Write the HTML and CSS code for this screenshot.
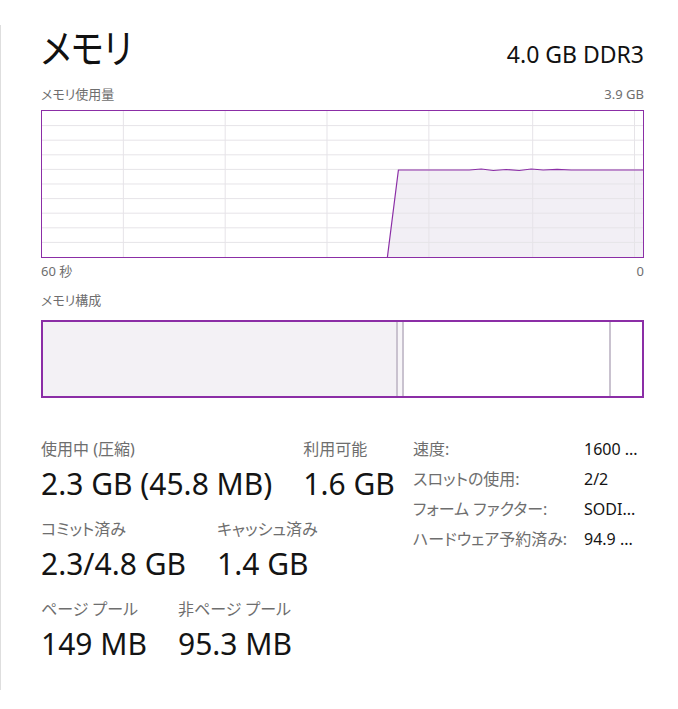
FILE: index.html
```html
<!DOCTYPE html>
<html lang="ja">
<head>
<meta charset="utf-8">
<title>メモリ</title>
<link rel="stylesheet" href="styles.css">
</head>
<body>
<div class="panel">
  <div class="title-row">
    <h1 class="title">メモリ</h1>
    <div class="model">4.0 GB DDR3</div>
  </div>

  <div class="cap-row top-cap">
    <span>メモリ使用量</span>
    <span>3.9 GB</span>
  </div>
  <div class="chart">
    <svg class="chart-svg" viewBox="0 0 602 146" preserveAspectRatio="none" aria-hidden="true">
      <polygon class="area" points="346,146 357,59 428,59 440,58 452,59.5 465,58.5 478,59.5 490,58 502,59 516,58.4 530,59 602,59 602,146"/>
      <g class="grid">
        <line x1="0" y1="14.6" x2="602" y2="14.6"/>
        <line x1="0" y1="29.2" x2="602" y2="29.2"/>
        <line x1="0" y1="43.8" x2="602" y2="43.8"/>
        <line x1="0" y1="58.4" x2="602" y2="58.4"/>
        <line x1="0" y1="73" x2="602" y2="73"/>
        <line x1="0" y1="87.6" x2="602" y2="87.6"/>
        <line x1="0" y1="102.2" x2="602" y2="102.2"/>
        <line x1="0" y1="116.8" x2="602" y2="116.8"/>
        <line x1="0" y1="131.4" x2="602" y2="131.4"/>
        <line x1="81.5" y1="0" x2="81.5" y2="146"/>
        <line x1="183.5" y1="0" x2="183.5" y2="146"/>
        <line x1="285.5" y1="0" x2="285.5" y2="146"/>
        <line x1="387.5" y1="0" x2="387.5" y2="146"/>
        <line x1="491.5" y1="0" x2="491.5" y2="146"/>
        <line x1="593.5" y1="0" x2="593.5" y2="146"/>
      </g>
      <polyline class="line" points="346,146 357,59 428,59 440,58 452,59.5 465,58.5 478,59.5 490,58 502,59 516,58.4 530,59 602,59"/>
    </svg>
  </div>
  <div class="cap-row axis-row">
    <span>60 秒</span>
    <span>0</span>
  </div>

  <div class="cap-row comp-cap">
    <span>メモリ構成</span>
  </div>
  <div class="composition">
    <div class="seg seg-inuse"></div>
    <div class="seg seg-modified"></div>
    <div class="seg seg-standby"></div>
    <div class="seg seg-free"></div>
  </div>

  <div class="stats">
    <div class="stats-left">
      <div class="stat-row">
        <div class="stat">
          <div class="stat-label">使用中 (圧縮)</div>
          <div class="stat-value">2.3 GB (45.8 MB)</div>
        </div>
        <div class="stat">
          <div class="stat-label">利用可能</div>
          <div class="stat-value">1.6 GB</div>
        </div>
      </div>
      <div class="stat-row">
        <div class="stat">
          <div class="stat-label">コミット済み</div>
          <div class="stat-value">2.3/4.8 GB</div>
        </div>
        <div class="stat">
          <div class="stat-label">キャッシュ済み</div>
          <div class="stat-value">1.4 GB</div>
        </div>
      </div>
      <div class="stat-row">
        <div class="stat">
          <div class="stat-label">ページ プール</div>
          <div class="stat-value">149 MB</div>
        </div>
        <div class="stat">
          <div class="stat-label">非ページ プール</div>
          <div class="stat-value">95.3 MB</div>
        </div>
      </div>
    </div>
    <dl class="props">
      <dt>速度:</dt><dd>1600 ...</dd>
      <dt>スロットの使用:</dt><dd>2/2</dd>
      <dt>フォーム ファクター:</dt><dd>SODI...</dd>
      <dt>ハードウェア予約済み:</dt><dd>94.9 ...</dd>
    </dl>
  </div>
</div>
</body>
</html>
```

FILE: styles.css
```css
html, body {
  margin: 0;
  padding: 0;
  background: #ffffff;
}

body {
  font-family: "Noto Sans", "Noto Sans CJK JP", sans-serif;
  font-feature-settings: "palt";
  color: #1b1b1b;
}

.panel {
  margin-top: 25px;
  height: 665px;
  border-left: 1px solid #dedede;
  padding: 0 34px 0 40px;
  box-sizing: border-box;
}

.title-row {
  display: flex;
  justify-content: space-between;
  align-items: baseline;
  height: 46px;
}

.title {
  margin: 0;
  font-size: 40px;
  font-weight: 400;
  line-height: 46px;
  color: #111;
  transform: scaleX(0.86);
  transform-origin: left center;
}

.model {
  font-size: 23px;
  line-height: 30px;
  color: #111;
}

.cap-row {
  display: flex;
  justify-content: space-between;
  font-size: 13px;
  line-height: 18px;
  color: #6e6e6e;
}

.top-cap {
  margin-top: 14px;
  margin-bottom: 7px;
}

.chart {
  height: 146px;
  border: 1px solid #8b2ea6;
}

.chart-svg {
  display: block;
  width: 100%;
  height: 100%;
}

.area {
  fill: #f2eff5;
}

.grid line {
  stroke: #e6e4e8;
  stroke-width: 1;
}

.line {
  fill: none;
  stroke: #8b2ea6;
  stroke-width: 1.2;
}

.axis-row {
  margin-top: 4px;
}

.comp-cap {
  margin-top: 11px;
  margin-bottom: 11px;
}

.composition {
  display: flex;
  height: 74px;
  border: 2px solid #8b2ea6;
}

.seg {
  height: 100%;
  box-sizing: border-box;
}

.seg-inuse {
  width: 355px;
  background: #f3f1f5;
  border-right: 2px solid #c9c2cf;
}

.seg-modified {
  width: 6px;
  background: #f7f5f8;
  border-right: 2px solid #c9c2cf;
}

.seg-standby {
  width: 207px;
  background: #ffffff;
  border-right: 2px solid #c9c2cf;
}

.seg-free {
  flex: 1;
  background: #ffffff;
}

.stats {
  display: flex;
  margin-top: 41px;
}

.stats-left {
  width: 372px;
}

.stat-row {
  display: flex;
  gap: 31px;
  height: 80px;
}

.stat-label {
  font-size: 16px;
  line-height: 20px;
  color: #6e6e6e;
}

.stat-value {
  margin-top: 6px;
  font-size: 30px;
  line-height: 37px;
  color: #141414;
}

.props {
  display: grid;
  grid-template-columns: 171px auto;
  grid-auto-rows: 30px;
  margin: 0;
  font-size: 16px;
  line-height: 20px;
}

.props dt {
  color: #6e6e6e;
}

.props dd {
  margin: 0;
  color: #141414;
}
```
